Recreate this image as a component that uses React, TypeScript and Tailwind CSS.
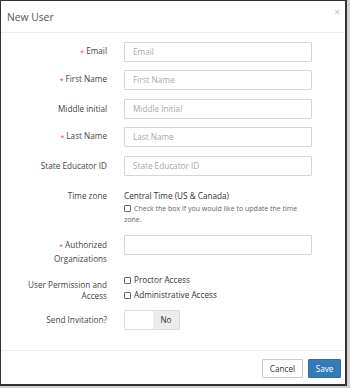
import React from "react";

const Star = () => (
  <span className="text-[#d9534f] text-[7px] mr-[2px] align-[-1px]">*</span>
);

const Box = () => (
  <span className="inline-block w-[7px] h-[7px] border border-[#666] rounded-[1px] bg-white mr-[3px] align-[-1px]" />
);

function InputRow({ label, placeholder, req }: { label: string; placeholder: string; req?: boolean }) {
  return (
    <div className="flex items-center h-[20px]">
      <div className="w-[106px] text-right text-[8.2px] text-[#444] leading-[12px]">
        {req && <Star />}
        {label}
      </div>
      <div className="ml-[17px] w-[188px] h-[20px] border border-[#d6d6d6] rounded-[1px] flex items-center pl-[8px] text-[8.2px] text-[#a8a8a8]">
        {placeholder}
      </div>
    </div>
  );
}

export default function App() {
  return (
    <div className="w-[350px] h-[388px] bg-[#d2d2d2] font-['Open_Sans',sans-serif]">
      <div className="w-[347px] h-[386px] bg-white border-l border-t border-r-2 border-b-2 border-[#333] flex flex-col">
        <div className="h-[32px] shrink-0 border-b border-[#efefef] flex items-center justify-between pl-[6px] pr-[5px]">
          <span className="text-[10.3px] text-[#555] leading-[14px]">New User</span>
          <span className="text-[10px] text-[#bdbdbd] leading-[10px] -mt-[9px]">×</span>
        </div>
        <div className="flex-1 pt-[8.7px] flex flex-col">
          <div className="flex flex-col gap-[8.6px]">
            <InputRow label="Email" placeholder="Email" req />
            <InputRow label="First Name" placeholder="First Name" req />
            <InputRow label="Middle initial" placeholder="Middle Initial" />
            <InputRow label="Last Name" placeholder="Last Name" req />
            <InputRow label="State Educator ID" placeholder="State Educator ID" />
          </div>
          <div className="flex mt-[8.6px] pt-[5px]">
            <div className="w-[106px] text-right text-[8.2px] text-[#444] leading-[12px]">Time zone</div>
            <div className="ml-[17px] w-[188px]">
              <div className="text-[8.2px] text-[#333] leading-[12px]">Central Time (US &amp; Canada)</div>
              <div className="mt-[2.3px] text-[7px] text-[#666] leading-[10.7px]">
                <Box />
                Check the box if you would like to update the time zone.
              </div>
            </div>
          </div>
          <div className="flex mt-[9.6px]">
            <div className="w-[106px] text-right text-[8.2px] text-[#444] leading-[12px] pt-[4px]">
              <Star />
              Authorized
              <br />
              Organizations
            </div>
            <div className="ml-[17px] w-[188px] h-[20px] border border-[#d6d6d6] rounded-[1px]" />
          </div>
          <div className="flex mt-[8px]">
            <div className="w-[106px] text-right text-[8.2px] text-[#444] leading-[11.6px] pt-[5.7px]">
              User Permission and
              <br />
              Access
            </div>
            <div className="ml-[17px] w-[188px] text-[8.2px] text-[#333] leading-[15.3px] -mt-[1px]">
              <div>
                <Box />
                Proctor Access
              </div>
              <div>
                <Box />
                Administrative Access
              </div>
            </div>
          </div>
          <div className="flex items-center mt-[7.4px]">
            <div className="w-[106px] text-right text-[8.2px] text-[#444] leading-[12px]">Send Invitation?</div>
            <div className="ml-[17px] w-[56px] h-[20px] border border-[#dcdcdc] rounded-[1px] flex">
              <div className="w-[28px] bg-white" />
              <div className="flex-1 bg-[#ececec] flex items-center justify-center text-[8.2px] text-[#333]">No</div>
            </div>
          </div>
        </div>
        <div className="h-[34px] shrink-0 border-t border-[#efefef] flex justify-end items-start pt-[8px] pr-[4.3px] gap-[5.6px]">
          <div className="w-[40.4px] h-[19.3px] border border-[#ccc] rounded-[1px] bg-white flex items-center justify-center text-[8.2px] text-[#333]">
            Cancel
          </div>
          <div className="w-[32.4px] h-[19.3px] border border-[#2e6da4] rounded-[1px] bg-[#337ab7] flex items-center justify-center text-[8.2px] text-white">
            Save
          </div>
        </div>
      </div>
    </div>
  );
}
